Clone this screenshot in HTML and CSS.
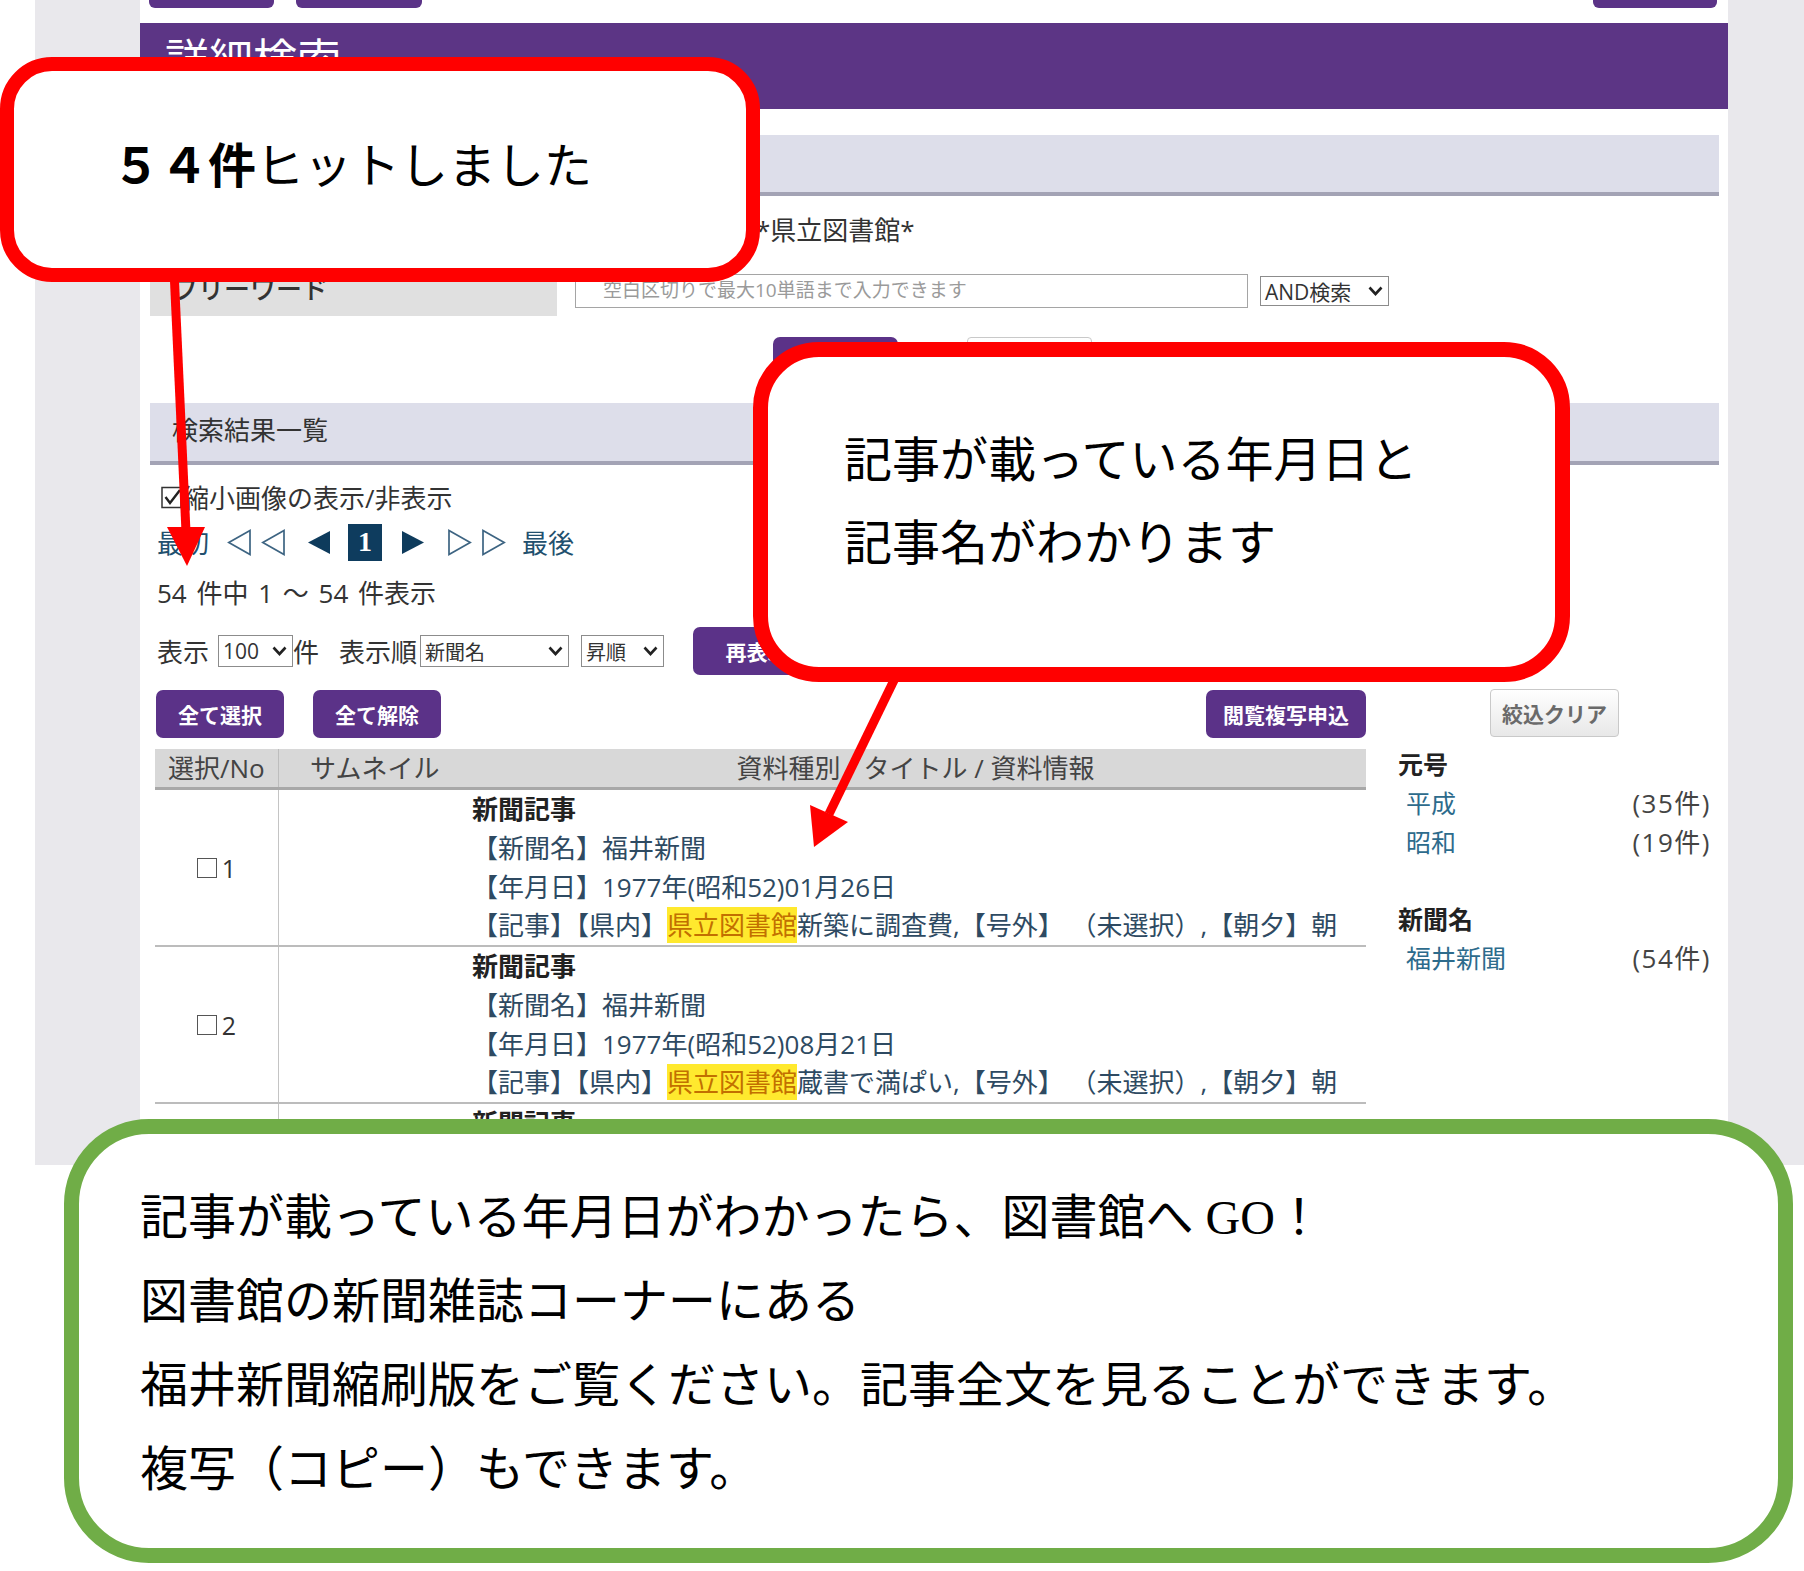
FILE: index.html
```html
<!DOCTYPE html>
<html lang="ja">
<head>
<meta charset="utf-8">
<title>詳細検索</title>
<link rel="stylesheet" href="styles.css">
</head>
<body>
<div class="page">
  <main class="panel">
    <div class="tabs"><span class="tab tab1"></span><span class="tab tab2"></span><span class="tab tab3"></span></div>
    <div class="title-bar">詳細検索</div>
    <div class="cond-bar"></div>
    <div class="cond-row">*県立図書館*</div>
    <div class="fw-row">
      <div class="fw-label">フリーワード</div>
      <div class="fw-input">空白区切りで最大10単語まで入力できます</div>
      <div class="sel sel-and"><span>AND検索</span><svg class="chev" width="15" height="10" viewBox="0 0 15 10"><polyline points="1.5,1.5 7.5,8 13.5,1.5" fill="none" stroke="#222" stroke-width="2.6"/></svg></div>
    </div>
    <div class="search-btns"><span class="btn btn-purple btn-search">検索</span><span class="btn btn-light btn-clear">クリア</span></div>
    <div class="result-bar">検索結果一覧</div>
    <div class="controls">
      <div class="thumb-toggle"><svg class="cbox" width="22" height="23" viewBox="0 0 22 23"><rect x="1" y="1.5" width="19" height="20" fill="#fff" stroke="#333" stroke-width="1.5"/><polyline points="4.5,11 9,17 19,4" fill="none" stroke="#222" stroke-width="2.4"/></svg>縮小画像の表示/非表示</div>
      <div class="pager">
        <span class="pg-link">最初</span>
        <svg class="pg-dbl" width="58" height="27" viewBox="0 0 58 27"><polygon points="23,1.5 1.8,13.5 23,25.5" fill="none" stroke="#3d6482" stroke-width="1.7"/><polygon points="57,1.5 35.8,13.5 57,25.5" fill="none" stroke="#3d6482" stroke-width="1.7"/></svg>
        <svg class="pg-one pg-prev" width="22" height="23" viewBox="0 0 22 23"><polygon points="22,0 0,11.5 22,23" fill="#0e3b5c"/></svg>
        <span class="pg-cur">1</span>
        <svg class="pg-one pg-next" width="22" height="23" viewBox="0 0 22 23"><polygon points="0,0 22,11.5 0,23" fill="#0e3b5c"/></svg>
        <svg class="pg-dbl pg-fwd" width="58" height="27" viewBox="0 0 58 27"><polygon points="1,1.5 22.2,13.5 1,25.5" fill="none" stroke="#3d6482" stroke-width="1.7"/><polygon points="35,1.5 56.2,13.5 35,25.5" fill="none" stroke="#3d6482" stroke-width="1.7"/></svg>
        <span class="pg-link pg-last">最後</span>
      </div>
      <div class="count">54 件中 1 ～ 54 件表示</div>
      <div class="order-row">
        <span>表示</span>
        <div class="sel sel-num"><span>100</span><svg class="chev" width="15" height="10" viewBox="0 0 15 10"><polyline points="1.5,1.5 7.5,8 13.5,1.5" fill="none" stroke="#222" stroke-width="2.6"/></svg></div>
        <span>件</span>
        <span class="order-label">表示順</span>
        <div class="sel sel-order"><span>新聞名</span><svg class="chev" width="15" height="10" viewBox="0 0 15 10"><polyline points="1.5,1.5 7.5,8 13.5,1.5" fill="none" stroke="#222" stroke-width="2.6"/></svg></div>
        <div class="sel sel-dir"><span>昇順</span><svg class="chev" width="15" height="10" viewBox="0 0 15 10"><polyline points="1.5,1.5 7.5,8 13.5,1.5" fill="none" stroke="#222" stroke-width="2.6"/></svg></div>
        <span class="btn btn-purple btn-redisp">再表示</span>
      </div>
    </div>
    <div class="results">
      <div class="main">
        <div class="btn-row">
          <span class="btn btn-purple btn-all">全て選択</span>
          <span class="btn btn-purple btn-none">全て解除</span>
          <span class="btn btn-purple btn-req">閲覧複写申込</span>
        </div>
        <div class="res-table">
          <div class="thead">
            <div class="c1">選択/No</div>
            <div class="c2">サムネイル</div>
            <div class="c3">資料種別 / タイトル / 資料情報</div>
          </div>
          <div class="row">
            <div class="c1"><span class="sq"></span>1</div>
            <div class="c2"></div>
            <div class="c3">
              <div class="kind">新聞記事</div>
              <div>【新聞名】福井新聞</div>
              <div>【年月日】1977年(昭和52)01月26日</div>
              <div>【記事】【県内】<span class="hl">県立図書館</span>新築に調査費,【号外】 （未選択）,【朝夕】朝</div>
            </div>
          </div>
          <div class="row">
            <div class="c1"><span class="sq"></span>2</div>
            <div class="c2"></div>
            <div class="c3">
              <div class="kind">新聞記事</div>
              <div>【新聞名】福井新聞</div>
              <div>【年月日】1977年(昭和52)08月21日</div>
              <div>【記事】【県内】<span class="hl">県立図書館</span>蔵書で満ぱい,【号外】 （未選択）,【朝夕】朝</div>
            </div>
          </div>
          <div class="row">
            <div class="c1"><span class="sq"></span>3</div>
            <div class="c2"></div>
            <div class="c3">
              <div class="kind">新聞記事</div>
              <div>【新聞名】福井新聞</div>
            </div>
          </div>
        </div>
      </div>
      <aside class="facets">
        <span class="btn btn-light btn-narrow">絞込クリア</span>
        <div class="facet-h">元号</div>
        <div class="facet-item"><span class="fl">平成</span><span class="fc">(35件)</span></div>
        <div class="facet-item"><span class="fl">昭和</span><span class="fc">(19件)</span></div>
        <div class="facet-h facet-h2">新聞名</div>
        <div class="facet-item"><span class="fl">福井新聞</span><span class="fc">(54件)</span></div>
      </aside>
    </div>
  </main>
</div>

<svg class="arrows" width="1804" height="1571" viewBox="0 0 1804 1571">
  <line x1="174" y1="270" x2="186" y2="532" stroke="#ff0000" stroke-width="9"/>
  <polygon points="167,527 205,527 187,566" fill="#ff0000"/>
  <line x1="898" y1="672" x2="829" y2="814" stroke="#ff0000" stroke-width="9"/>
  <polygon points="810,805 848,822 814,847" fill="#ff0000"/>
</svg>

<div class="callout callout-hits"><span class="strong">５４件</span>ヒットしました</div>
<div class="callout callout-info">
  <div>記事が載っている年月日と</div>
  <div>記事名がわかります</div>
</div>
<div class="callout callout-go">
  <div>記事が載っている年月日がわかったら、図書館へ GO！</div>
  <div>図書館の新聞雑誌コーナーにある</div>
  <div>福井新聞縮刷版をご覧ください。記事全文を見ることができます。</div>
  <div>複写（コピー）もできます。</div>
</div>
</body>
</html>
```

FILE: styles.css
```css
* { box-sizing: border-box; }

body {
  margin: 0;
  width: 1804px;
  height: 1571px;
  position: relative;
  overflow: hidden;
  background: #ffffff;
  font-family: "Open Sans", "Noto Sans CJK JP", sans-serif;
  color: #333333;
}

.page {
  margin-left: 35px;
  padding: 0 76px 0 105px;
  height: 1165px;
  background: #e9e8ec;
}

.panel {
  background: #ffffff;
  height: 100%;
}

/* top tabs */
.tabs {
  display: flex;
  height: 8px;
  padding: 0 11px 0 9px;
}
.tab {
  display: block;
  height: 8px;
  background: #5b3387;
  border-radius: 0 0 6px 6px;
}
.tab1 { width: 125px; }
.tab2 { width: 126px; margin-left: 22px; }
.tab3 { width: 124px; margin-left: auto; }

.title-bar {
  margin-top: 15px;
  height: 86px;
  background: #5c3585;
  color: #ffffff;
  font-size: 44px;
  line-height: 50px;
  padding: 11px 0 0 25px;
}

.cond-bar {
  margin: 26px 9px 0 10px;
  height: 61px;
  background: #dddeea;
  border-bottom: 4px solid #a3a3b5;
}

.cond-row {
  height: 69px;
  padding: 19px 0 0 616px;
  font-size: 26px;
  line-height: 30px;
  color: #333333;
}

.fw-row {
  display: flex;
  align-items: center;
  height: 51px;
}
.fw-label {
  margin-left: 10px;
  width: 407px;
  height: 51px;
  background: #e0e0e0;
  font-size: 26px;
  font-weight: 500;
  line-height: 49px;
  padding-left: 22px;
  color: #333333;
}
.fw-input {
  margin-left: 18px;
  width: 673px;
  height: 34px;
  border: 1px solid #a5a5a5;
  font-size: 19px;
  line-height: 31px;
  color: #9a9a9a;
  padding-left: 27px;
}

.sel {
  display: flex;
  align-items: center;
  justify-content: space-between;
  border: 1px solid #8c8c8c;
  background: #ffffff;
  font-size: 20px;
  color: #333333;
  padding: 0 5px 0 4px;
}
.sel-and { margin-left: 12px; width: 129px; height: 30px; font-size: 21px; }
.chev { display: block; }

.search-btns {
  display: flex;
  margin-top: 21px;
  padding-left: 633px;
  height: 48px;
}

.btn {
  display: flex;
  align-items: center;
  justify-content: center;
  height: 48px;
  border-radius: 7px;
  font-size: 21px;
  font-weight: 700;
}
.btn-purple { background: #5b3288; color: #ffffff; }
.btn-light {
  background: linear-gradient(#ffffff, #e8e8e8);
  border: 1px solid #c9c9c9;
  color: #6a6a6a;
  border-radius: 4px;
}
.btn-search { width: 125px; }
.btn-clear { width: 125px; margin-left: 69px; }

.result-bar {
  margin: 18px 9px 0 10px;
  height: 62px;
  background: #dddeea;
  border-bottom: 4px solid #a3a3b5;
  font-size: 26px;
  line-height: 54px;
  padding-left: 22px;
  color: #333333;
}

/* controls */
.controls { padding-left: 17px; }

.thumb-toggle {
  margin-top: 15px;
  display: flex;
  align-items: center;
  height: 34px;
  font-size: 26px;
}
.cbox { display: block; margin: 0 0 0 4px; }

.pager {
  margin-top: 8px;
  height: 40px;
  display: flex;
  align-items: center;
}
.pg-link { font-size: 26px; color: #22506e; }
.pg-dbl { display: block; margin-left: 18px; }
.pg-prev { display: block; margin-left: 23px; }
.pg-cur {
  margin-left: 18px;
  width: 34px;
  height: 37px;
  background: #0e3c5e;
  color: #ffffff;
  font-family: "Liberation Serif", serif;
  font-weight: 700;
  font-size: 28px;
  display: flex;
  align-items: center;
  justify-content: center;
}
.pg-next { display: block; margin-left: 20px; }
.pg-fwd { margin-left: 24px; }
.pg-last { margin-left: 16px; }

.count {
  margin-top: 14px;
  font-size: 26px;
  line-height: 34px;
  word-spacing: 3px;
}

.order-row {
  margin-top: 17px;
  height: 48px;
  display: flex;
  align-items: center;
  font-size: 26px;
}
.sel-num { margin-left: 9px; width: 75px; height: 32px; font-size: 21px; }
.order-label { margin-left: 20px; }
.sel-order { margin-left: 3px; width: 149px; height: 32px; }
.sel-dir { margin-left: 12px; width: 83px; height: 32px; }
.btn-redisp { margin-left: 29px; width: 128px; }

/* results */
.results {
  display: flex;
  margin-top: 15px;
  padding-left: 15px;
}
.main { width: 1211px; }

.btn-row { display: flex; height: 48px; }
.btn-all { width: 128px; margin-left: 1px; }
.btn-none { width: 128px; margin-left: 29px; }
.btn-req { width: 160px; margin-left: auto; }

.res-table { margin-top: 11px; }

.thead {
  display: grid;
  grid-template-columns: 123px 187px 901px;
  height: 41px;
  background: #d8d8d8;
  border-bottom: 3px solid #a8a8a8;
  font-size: 26px;
  line-height: 38px;
  color: #444444;
}
.thead .c1 { padding-left: 13px; }
.thead .c2 { border-left: 1px solid #bdbdbd; padding-left: 31px; }
.thead .c3 { text-align: center; }

.row {
  display: grid;
  grid-template-columns: 123px 187px 901px;
  border-bottom: 2px solid #bcbcbc;
}
.row .c1 {
  display: flex;
  align-items: center;
  justify-content: center;
  font-size: 25px;
  color: #333333;
}
.sq {
  display: inline-block;
  width: 20px;
  height: 20px;
  border: 1px solid #555555;
  margin-right: 5px;
}
.row .c2 { border-left: 1px solid #c4c4c4; }
.row .c3 {
  padding-left: 7px;
  font-size: 26px;
  line-height: 38.75px;
  color: #2e4a62;
  white-space: nowrap;
}
.kind { font-weight: 700; color: #222222; }
.hl { background: #ffe92e; color: #c27000; }

/* facets */
.facets { margin-left: 32px; width: 313px; }
.btn-narrow { width: 129px; margin: -1px auto 0; }
.facet-h {
  margin-top: 8px;
  font-size: 25px;
  font-weight: 700;
  line-height: 39px;
  color: #222222;
}
.facet-h2 { margin-top: 38px; }
.facet-item {
  display: flex;
  justify-content: space-between;
  padding-left: 8px;
  font-size: 25px;
  line-height: 39px;
}
.fl { color: #2d6b8c; }
.fc { color: #444444; font-size: 26px; letter-spacing: 1.5px; }

/* overlays */
.arrows {
  position: absolute;
  left: 0;
  top: 0;
}

.callout {
  position: absolute;
  background: #ffffff;
  font-family: "Liberation Serif", "Noto Sans CJK JP", serif;
  font-size: 48px;
  color: #000000;
  white-space: nowrap;
}
.callout .strong { font-weight: 700; }
.callout-hits {
  left: 0;
  top: 57px;
  width: 760px;
  height: 225px;
  border: 14px solid #ff0000;
  border-radius: 52px;
  padding: 54px 0 0 98px;
  line-height: 83px;
}
.callout-info {
  left: 753px;
  top: 342px;
  width: 817px;
  height: 340px;
  border: 15px solid #ff0000;
  border-radius: 66px;
  padding: 62px 0 0 76px;
  line-height: 83px;
}
.callout-go {
  left: 64px;
  top: 1119px;
  width: 1729px;
  height: 444px;
  border: 15px solid #70ad47;
  border-radius: 85px;
  padding: 42px 0 0 61px;
  line-height: 84px;
}
```
